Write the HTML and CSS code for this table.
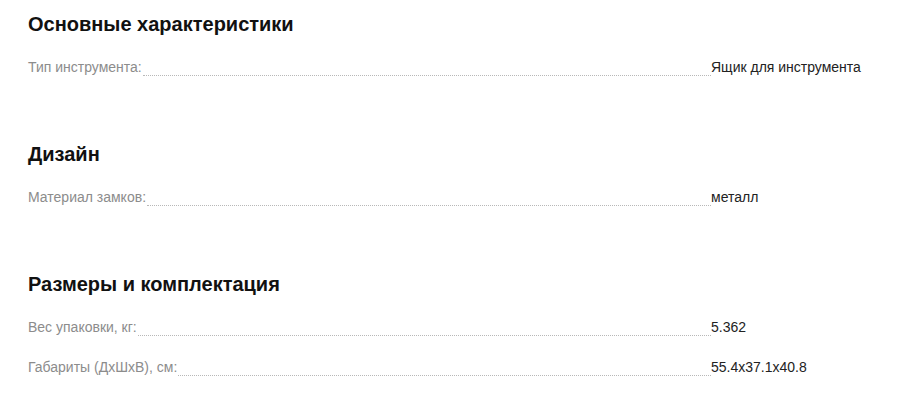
FILE: index.html
```html
<!DOCTYPE html>
<html lang="ru">
<head>
<meta charset="utf-8">
<title>Характеристики</title>
<link rel="stylesheet" href="styles.css">
</head>
<body>
<div class="specs">
  <section class="group">
    <h2 class="group-title">Основные характеристики</h2>
    <div class="row"><div class="name"><span class="label">Тип инструмента:</span><span class="dots"></span></div><div class="value">Ящик для инструмента</div></div>
  </section>
  <section class="group">
    <h2 class="group-title">Дизайн</h2>
    <div class="row"><div class="name"><span class="label">Материал замков:</span><span class="dots"></span></div><div class="value">металл</div></div>
  </section>
  <section class="group">
    <h2 class="group-title">Размеры и комплектация</h2>
    <div class="row"><div class="name"><span class="label">Вес упаковки, кг:</span><span class="dots"></span></div><div class="value">5.362</div></div>
    <div class="row"><div class="name"><span class="label">Габариты (ДхШхВ), см:</span><span class="dots"></span></div><div class="value">55.4x37.1x40.8</div></div>
  </section>
</div>
</body>
</html>
```
FILE: styles.css
```css
html, body {
  margin: 0;
  padding: 0;
  background: #fff;
}
body {
  font-family: "Liberation Sans", Arial, sans-serif;
  color: #1a1a1a;
}
.specs {
  padding: 12px 28px 0 28px;
  display: flex;
  flex-direction: column;
  gap: 45px;
}
.group-title {
  margin: 0 0 21px 0;
  font-size: 20px;
  font-weight: bold;
  line-height: 24px;
  color: #111;
}
.row {
  display: flex;
  align-items: baseline;
  height: 40px;
  font-size: 14px;
  line-height: 20px;
}
.name {
  flex: 0 0 683px;
  display: flex;
  align-items: flex-end;
}
.label {
  color: #8c8c8c;
}
.dots {
  flex: 1;
  border-bottom: 1px dotted #b8b8b8;
  margin: 0 0 1px 1px;
}
.value {
  color: #222;
}
```
